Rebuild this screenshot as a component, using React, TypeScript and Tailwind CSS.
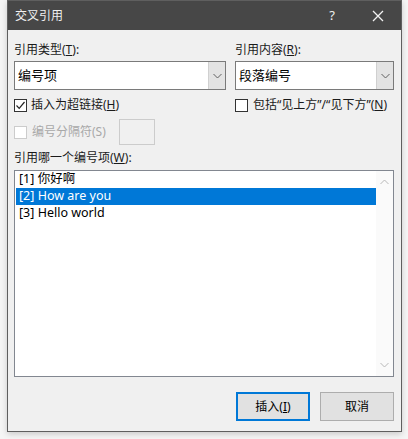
const font = { fontFamily: '"Noto Sans", "Noto Sans CJK SC", sans-serif' };

function Chevron({ up = false, color = "#606060" }: { up?: boolean; color?: string }) {
  return (
    <svg width="9" height="6" viewBox="0 0 9 6">
      <path
        d={up ? "M0.5 5 L4.5 1 L8.5 5" : "M0.5 1 L4.5 5 L8.5 1"}
        fill="none"
        stroke={color}
        strokeWidth="1"
      />
    </svg>
  );
}

function Combo({ value, width }: { value: string; width: string }) {
  return (
    <div className={`${width} h-[29px] flex border border-[#7a7a7a] bg-white`}>
      <div className="flex-1 flex items-center pl-[3px] text-[13px] text-black">{value}</div>
      <div className="w-[17px] flex items-center justify-center bg-[#e3e3e3] border-l border-[#d0d0d0]">
        <Chevron />
      </div>
    </div>
  );
}

function Box({ checked = false, disabled = false }: { checked?: boolean; disabled?: boolean }) {
  return (
    <div
      className={`w-[13px] h-[13px] border bg-white flex items-center justify-center ${
        disabled ? "border-[#cccccc]" : "border-[#333333]"
      }`}
    >
      {checked && (
        <svg width="11" height="11" viewBox="0 0 11 11">
          <path d="M1.5 5.5 L4.2 8.3 L9.5 2" fill="none" stroke="#222" strokeWidth="1.2" />
        </svg>
      )}
    </div>
  );
}

const items = ["[1] 你好啊", "[2] How are you", "[3] Hello world"];

export default function App() {
  return (
    <div className="w-[408px] h-[439px] bg-[#f5f5f5] pl-[7px]" style={font}>
      <div className="w-[395px] h-[432px] flex flex-col border border-[#5f5f5f] bg-[#f0f0f0] shadow-[0_2px_6px_rgba(0,0,0,0.18)]">
        <div className="h-[29px] bg-[#474747] flex items-center text-[#f0f0f0] shrink-0">
          <span className="pl-[7px] text-[12px] flex-1">交叉引用</span>
          <div className="w-[46px] flex items-center justify-center text-[13px]">?</div>
          <div className="w-[46px] flex items-center justify-center">
            <svg width="12" height="12" viewBox="0 0 12 12">
              <path d="M1 1 L11 11 M11 1 L1 11" stroke="#f2f2f2" strokeWidth="1.3" />
            </svg>
          </div>
        </div>

        <div className="flex-1 pl-[6px] pr-[7px] pt-[12px] text-[12px] text-[#1a1a1a]">
          <div className="flex justify-between">
            <div>
              <div className="leading-[16px] mb-[3px]">
                引用类型(<span className="underline">T</span>):
              </div>
              <Combo value="编号项" width="w-[212px]" />
            </div>
            <div>
              <div className="leading-[16px] mb-[3px]">
                引用内容(<span className="underline">R</span>):
              </div>
              <Combo value="段落编号" width="w-[159px]" />
            </div>
          </div>

          <div className="flex justify-between mt-[7px] leading-[16px]">
            <label className="flex items-center gap-[4px]">
              <Box checked />
              <span>
                插入为超链接(<span className="underline">H</span>)
              </span>
            </label>
            <label className="flex items-center gap-[5px] w-[159px]">
              <Box />
              <span>
                包括“见上方”/“见下方”(<span className="underline">N</span>)
              </span>
            </label>
          </div>

          <div className="flex items-center mt-[6px] h-[26px]">
            <label className="flex items-center gap-[5px] text-[#a8a8a8]">
              <Box disabled />
              <span>编号分隔符(S)</span>
            </label>
            <div className="ml-[13px] w-[36px] h-[26px] border border-[#cccccc] bg-[#f0f0f0]" />
          </div>

          <div className="leading-[16px] mt-[5px] mb-[4px]">
            引用哪一个编号项(<span className="underline">W</span>):
          </div>

          <div className="h-[207px] flex border border-[#828790] bg-white">
            <div className="flex-1 pl-[1px] pt-[0px]">
              {items.map((t, i) => (
                <div
                  key={i}
                  className={`h-[17px] flex items-center pl-[3px] text-[12.5px] ${
                    i === 1 ? "bg-[#0078d7] text-white" : "text-black"
                  }`}
                >
                  {t}
                </div>
              ))}
            </div>
            <div className="w-[17px] flex flex-col justify-between items-center py-[8px] bg-[#fafafa]">
              <Chevron up color="#b8b8b8" />
              <Chevron color="#b8b8b8" />
            </div>
          </div>

          <div className="flex justify-end gap-[10px] mt-[15px]">
            <button className="w-[74px] h-[29px] border-2 border-[#0078d7] bg-[#e1e1e1] text-[12px] text-black">
              插入(<span className="underline">I</span>)
            </button>
            <button className="w-[74px] h-[29px] border border-[#adadad] bg-[#e1e1e1] text-[12px] text-black">
              取消
            </button>
          </div>
        </div>
      </div>
    </div>
  );
}
